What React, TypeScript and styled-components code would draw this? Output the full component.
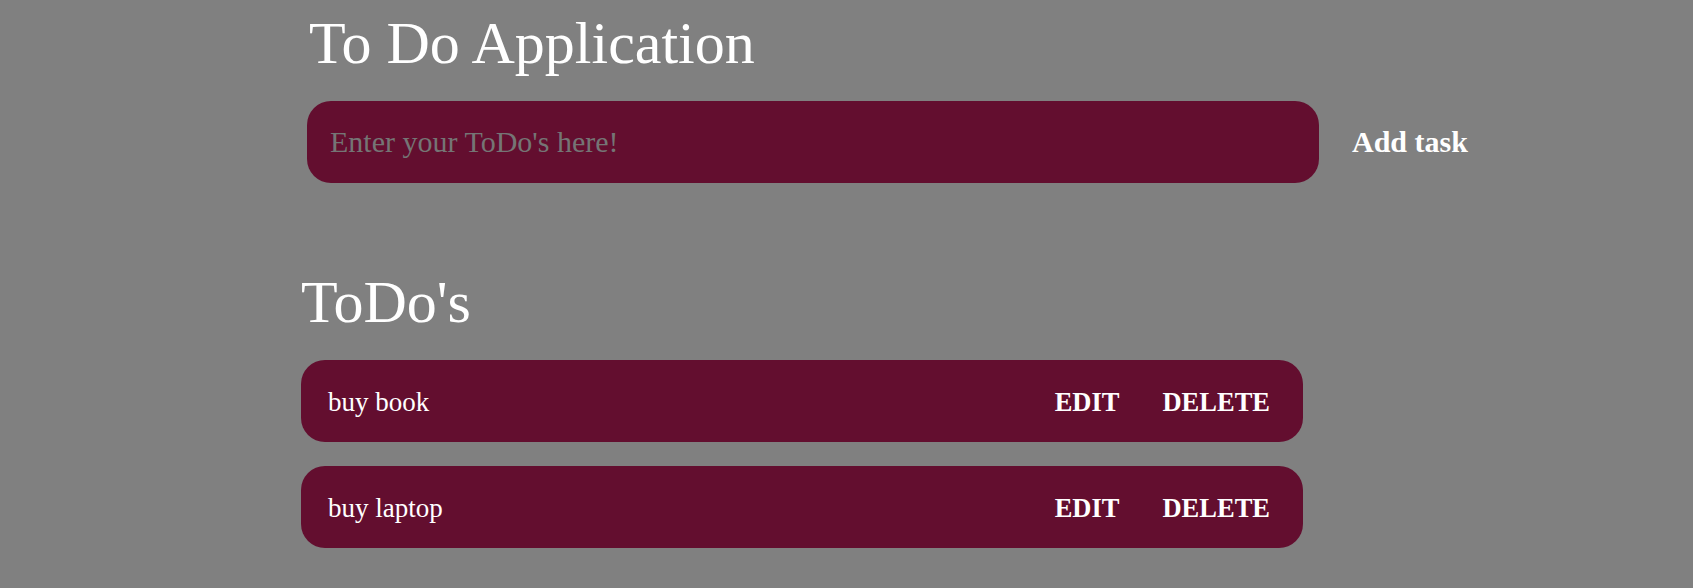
import React, { useState } from "react";
import styled, { createGlobalStyle } from "styled-components";

const GlobalStyle = createGlobalStyle`
  html, body {
    margin: 0;
    padding: 0;
    background: #808080;
  }
  body {
    font-family: "Liberation Serif", "Times New Roman", serif;
    color: #ffffff;
  }
`;

const Page = styled.div`
  padding: 8px 0 40px 301px;
  display: flex;
  flex-direction: column;
`;

const Title = styled.h1`
  margin: 1px 0 23px 8px;
  font-size: 60px;
  font-weight: 400;
  line-height: 69px;
  color: #ffffff;
`;

const InputRow = styled.form`
  display: flex;
  align-items: center;
  gap: 33px;
  margin-left: 6px;
`;

const TaskInput = styled.input`
  width: 1012px;
  height: 82px;
  box-sizing: border-box;
  border: none;
  outline: none;
  border-radius: 24px;
  background: #630e2f;
  padding: 0 0 0 23px;
  font-family: "Liberation Serif", "Times New Roman", serif;
  font-size: 30px;
  color: #ffffff;
  &::placeholder {
    color: #757575;
  }
`;

const TextButton = styled.button<{ $size?: number }>`
  background: none;
  border: none;
  padding: 0;
  cursor: pointer;
  font-family: "Liberation Serif", "Times New Roman", serif;
  font-size: ${(p) => p.$size ?? 26}px;
  font-weight: 700;
  color: #ffffff;
`;

const SectionTitle = styled.h2`
  margin: 85px 0 23px 0;
  font-size: 60px;
  font-weight: 400;
  line-height: 69px;
  color: #ffffff;
`;

const List = styled.div`
  display: flex;
  flex-direction: column;
  gap: 24px;
`;

const Row = styled.div`
  width: 1002px;
  height: 82px;
  box-sizing: border-box;
  border-radius: 24px;
  background: #630e2f;
  display: flex;
  align-items: center;
  padding: 2px 33px 0 27px;
`;

const RowText = styled.span`
  flex: 1;
  font-size: 27px;
  color: #ffffff;
`;

const Actions = styled.div`
  display: flex;
  align-items: center;
  gap: 43px;
`;

export default function App() {
  const [todos] = useState(["buy book", "buy laptop"]);
  return (
    <>
      <GlobalStyle />
      <Page>
        <Title>To Do Application</Title>
        <InputRow onSubmit={(e) => e.preventDefault()}>
          <TaskInput placeholder="Enter your ToDo's here!" />
          <TextButton $size={30} type="submit">Add task</TextButton>
        </InputRow>
        <SectionTitle>ToDo's</SectionTitle>
        <List>
          {todos.map((t) => (
            <Row key={t}>
              <RowText>{t}</RowText>
              <Actions>
                <TextButton $size={26.5}>EDIT</TextButton>
                <TextButton $size={26.5}>DELETE</TextButton>
              </Actions>
            </Row>
          ))}
        </List>
      </Page>
    </>
  );
}
